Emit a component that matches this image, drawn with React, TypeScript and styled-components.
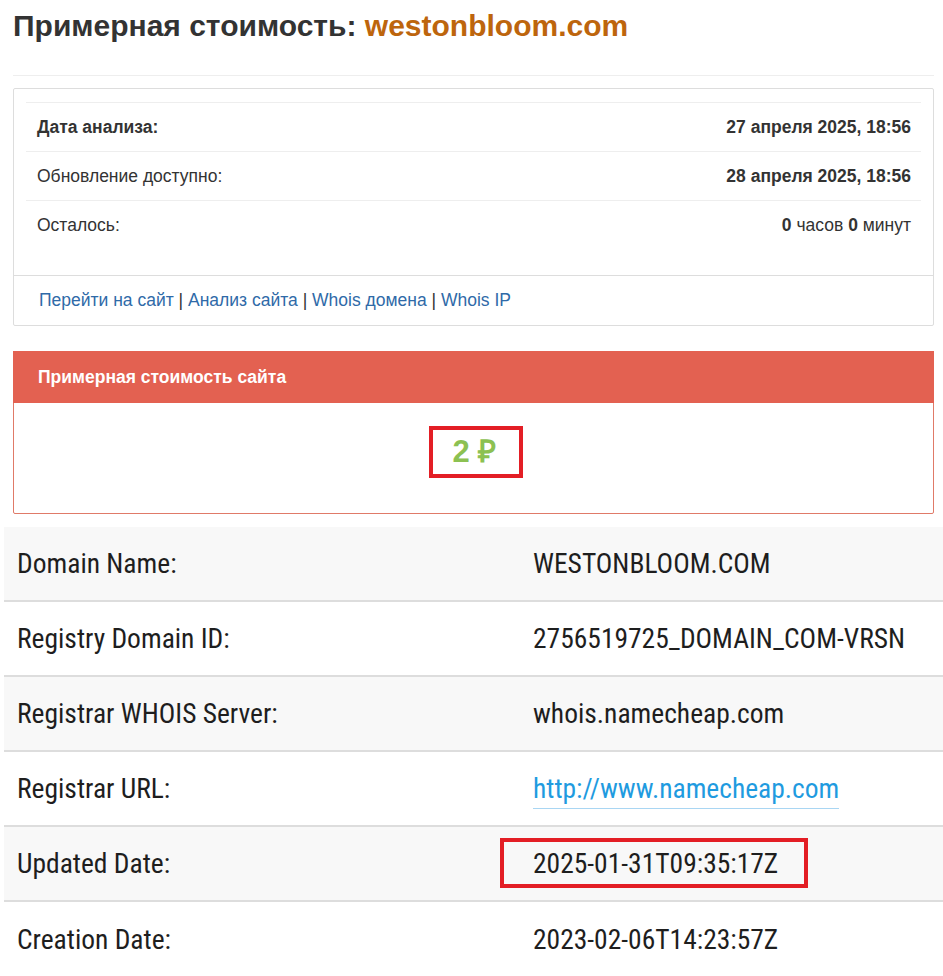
import React from "react";
import styled, { createGlobalStyle } from "styled-components";

const Global = createGlobalStyle`
  html, body { margin: 0; padding: 0; background: #fff; }
  body { font-family: "Liberation Sans", Arial, sans-serif; color: #333; }
  * { box-sizing: border-box; }
`;

const Page = styled.div`
  width: 943px;
  overflow: hidden;
  padding-left: 4px;
`;

const Top = styled.div`
  margin: 0 9px 0 9px;
`;

const Title = styled.h1`
  margin: 0;
  padding-top: 9px;
  font-size: 30px;
  line-height: 34px;
  font-weight: 700;
  color: #333;
`;

const Domain = styled.span`
  color: #bd650d;
`;

const Rule = styled.hr`
  margin: 32px 0 12px;
  border: 0;
  border-top: 1px solid #eee;
  height: 0;
`;

const InfoBox = styled.div`
  border: 1px solid #ddd;
  border-radius: 2px;
  background: #fff;
`;

const InfoBody = styled.div`
  padding: 13px 12px 26px;
`;

const InfoRow = styled.div`
  display: flex;
  justify-content: space-between;
  align-items: center;
  height: 49px;
  padding: 0 10px 0 11px;
  border-top: 1px solid #eee;
  font-size: 17.5px;
  color: #333;
`;

const Label = styled.span<{ $bold?: boolean }>`
  font-weight: ${(p) => (p.$bold ? 700 : 400)};
`;

const Value = styled.span`
  b { font-weight: 700; }
`;

const InfoFooter = styled.div`
  border-top: 1px solid #ddd;
  padding: 14px 25px 15px;
  font-size: 17.5px;
  line-height: 20px;
  color: #333;
`;

const Link = styled.a`
  color: #2f6aa8;
  text-decoration: none;
`;

const CostPanel = styled.div`
  margin-top: 25px;
  border: 1px solid #e07a68;
  border-radius: 2px;
`;

const CostHeader = styled.div`
  background: #e36151;
  color: #fff;
  font-weight: 700;
  font-size: 17.5px;
  height: 52px;
  display: flex;
  align-items: center;
  padding-left: 25px;
  margin: -1px -1px 0;
`;

const CostBody = styled.div`
  height: 110px;
  display: flex;
  justify-content: center;
  align-items: center;
  padding-bottom: 13px;
`;

const Price = styled.span`
  position: relative;
  font-size: 31px;
  line-height: 34px;
  font-weight: 700;
  color: #8cc152;
  left: 1px;
  &::after {
    content: "";
    position: absolute;
    left: -24px;
    right: -27px;
    top: -9px;
    bottom: -9px;
    border: 4px solid #e31e25;
  }
`;

const Whois = styled.div`
  margin-top: 13px;
  width: 960px;
  font-family: "Roboto Condensed", "Liberation Sans Narrow", "DejaVu Sans Condensed", Roboto, sans-serif;
  font-stretch: condensed;
`;

const WRow = styled.div<{ $alt?: boolean }>`
  display: grid;
  grid-template-columns: 516px 1fr;
  align-items: center;
  height: 75px;
  padding-left: 13px;
  background: ${(p) => (p.$alt ? "#f8f8f8" : "#fff")};
  border-bottom: 2px solid #ddd;
  font-size: 27.5px;
  color: #1e1e1e;
  &:last-child { border-bottom: 0; }
`;

const WLink = styled.a`
  color: #1f9be0;
  text-decoration: none;
  border-bottom: 1px solid #a9d6f3;
  padding-bottom: 3px;
`;

const Mark = styled.span`
  position: relative;
  &::after {
    content: "";
    position: absolute;
    left: -33px;
    right: -30px;
    top: -9px;
    bottom: -8px;
    border: 4px solid #e31e25;
  }
`;

const whois: { label: string; value: React.ReactNode }[] = [
  { label: "Domain Name:", value: "WESTONBLOOM.COM" },
  { label: "Registry Domain ID:", value: "2756519725_DOMAIN_COM-VRSN" },
  { label: "Registrar WHOIS Server:", value: "whois.namecheap.com" },
  { label: "Registrar URL:", value: <WLink href="#">http://www.namecheap.com</WLink> },
  { label: "Updated Date:", value: <Mark>2025-01-31T09:35:17Z</Mark> },
  { label: "Creation Date:", value: "2023-02-06T14:23:57Z" },
];

export default function App() {
  return (
    <Page>
      <Global />
      <Top>
        <Title>
          Примерная стоимость: <Domain>westonbloom.com</Domain>
        </Title>
        <Rule />
        <InfoBox>
          <InfoBody>
            <InfoRow>
              <Label $bold>Дата анализа:</Label>
              <Value><b>27 апреля 2025, 18:56</b></Value>
            </InfoRow>
            <InfoRow>
              <Label>Обновление доступно:</Label>
              <Value><b>28 апреля 2025, 18:56</b></Value>
            </InfoRow>
            <InfoRow>
              <Label>Осталось:</Label>
              <Value><b>0</b> часов <b>0</b> минут</Value>
            </InfoRow>
          </InfoBody>
          <InfoFooter>
            <Link href="#">Перейти на сайт</Link> | <Link href="#">Анализ сайта</Link> |{" "}
            <Link href="#">Whois домена</Link> | <Link href="#">Whois IP</Link>
          </InfoFooter>
        </InfoBox>
        <CostPanel>
          <CostHeader>Примерная стоимость сайта</CostHeader>
          <CostBody>
            <Price>2 ₽</Price>
          </CostBody>
        </CostPanel>
      </Top>
      <Whois>
        {whois.map((r, i) => (
          <WRow key={r.label} $alt={i % 2 === 0}>
            <span>{r.label}</span>
            <span>{r.value}</span>
          </WRow>
        ))}
      </Whois>
    </Page>
  );
}
